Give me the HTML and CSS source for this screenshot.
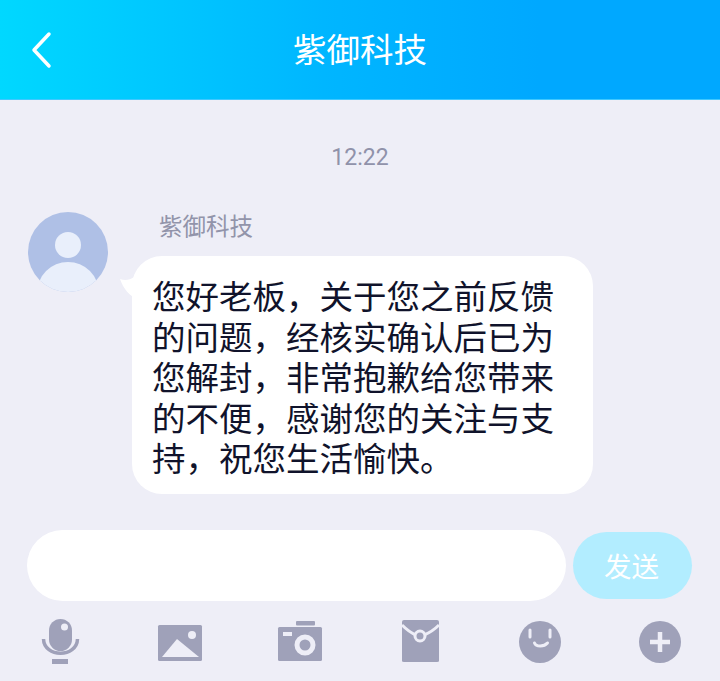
FILE: index.html
```html
<!DOCTYPE html>
<html lang="zh-CN">

<head>
    <meta charset="UTF-8">
    <meta name="viewport" content="width=device-width, initial-scale=1.0">
    <title>紫御科技</title>
    <link rel="stylesheet" href="styles.css">
</head>

<body>
    <header class="top-bar">
        <svg class="back-icon" width="24" height="38" viewBox="0 0 24 38">
            <path d="M19 3 L4 19 L19 35" />
        </svg>
        <div class="top-title">紫御科技</div>
    </header>

    <main class="chat">
        <div class="chat-time">12:22</div>

        <div class="message">
            <svg class="avatar" width="80" height="80" viewBox="0 0 80 80">
                <defs>
                    <clipPath id="avatarClip">
                        <circle cx="40" cy="40" r="40" />
                    </clipPath>
                </defs>
                <circle cx="40" cy="40" r="40" fill="#afc0e6" />
                <circle cx="40" cy="33" r="13" fill="#e9effb" />
                <ellipse cx="40" cy="81" rx="31" ry="31" fill="#e9effb" clip-path="url(#avatarClip)" />
            </svg>
            <div class="message-body">
                <div class="sender">紫御科技</div>
                <div class="bubble">
                    <svg class="bubble-tail" width="18" height="24" viewBox="0 0 18 24">
                        <path d="M0 2 C5 4 10 3 14 0 L18 0 L18 22 C10 20 3 11 0 2 Z" />
                    </svg>
                    您好老板，关于您之前反馈的问题，经核实确认后已为您解封，非常抱歉给您带来的不便，感谢您的关注与支持，祝您生活愉快。
                </div>
            </div>
        </div>
    </main>

    <div class="composer">
        <div class="composer-input"></div>
        <button class="send-button">发送</button>
    </div>

    <!-- Bottom tools -->
    <div class="toolbar">
        <svg class="tool" width="48" height="48" viewBox="0 0 48 48">
            <rect x="13" y="1" width="23" height="32" rx="11.5" />
            <circle class="cut" cx="28.5" cy="9" r="3.5" />
            <path class="line" d="M7.5 21 C8 40 41 40 41.500 21" />
            <rect x="16" y="41" width="16" height="5" />
        </svg>
        <svg class="tool" width="48" height="48" viewBox="0 0 48 48">
            <rect x="2" y="7" width="44" height="36" rx="1.5" />
            <circle class="cut" cx="36" cy="17" r="4" />
            <path class="cut" d="M6 39 L21 21 L43 39 Z" />
        </svg>
        <svg class="tool" width="48" height="48" viewBox="0 0 48 48">
            <rect x="20" y="3" width="19" height="4.500" rx="1" />
            <rect x="2" y="9" width="44" height="34" rx="1.500" />
            <rect class="cut" x="7" y="14" width="9" height="4" />
            <circle class="ring" cx="29" cy="27" r="8" />
        </svg>
        <svg class="tool" width="48" height="48" viewBox="0 0 48 48">
            <path d="M8 2 H41 Q43 2 43 4 V43 Q43 44 41 44 H8 Q6 44 6 43 V4 Q6 2 8 2 Z" />
            <path class="flap" d="M6 7 C11 12 15 15 20 17 M28 17 C33 15 38 12 43 7" />
            <circle class="ring small" cx="24" cy="18" r="5" />
        </svg>
        <svg class="tool" width="48" height="48" viewBox="0 0 48 48">
            <circle cx="24" cy="24" r="21" />
            <path class="face" d="M14 12 V19 M34 12 V19 M18.500 25 C20 29 28 29 31.500 25" />
        </svg>
        <svg class="tool" width="48" height="48" viewBox="0 0 48 48">
            <circle cx="24" cy="24" r="21" />
            <path class="face thick" d="M24 14 V34 M14 24 H34" />
        </svg>
    </div>
</body>

</html>
```

FILE: styles.css
```css
/* Base Styles */
body {
    font-family: "Noto Sans CJK SC", "Noto Sans", sans-serif;
    background-color: #eeeef7;
    margin: 0;
    padding: 0;
    height: 681px;
    overflow: hidden;
    display: flex;
    flex-direction: column;
}

.top-bar {
    height: 99px;
    flex-shrink: 0;
    display: flex;
    align-items: center;
    justify-content: center;
    position: relative;
    background: linear-gradient(90deg, #00d8ff 0%, #00b6ff 45%, #00a8ff 75%, #00a8ff 100%);
    border-bottom: 1px solid #40c8ff;
}

.back-icon {
    position: absolute;
    left: 30px;
    top: 31px;
}

.back-icon path {
    fill: none;
    stroke: white;
    stroke-width: 3.5;
    stroke-linecap: round;
    stroke-linejoin: round;
}

.top-title {
    color: white;
    font-size: 33.5px;
    line-height: 46px;
    margin-bottom: 3px;
}

/* Chat */
.chat {
    flex: 1;
}

.chat-time {
    margin-top: 43px;
    height: 30px;
    line-height: 30px;
    text-align: center;
    font-family: Roboto, sans-serif;
    font-size: 23px;
    color: #9092aa;
}

.message {
    display: flex;
    gap: 24px;
    margin-top: 39px;
    padding-left: 28px;
}

.avatar {
    flex-shrink: 0;
}

.sender {
    margin-left: 27px;
    height: 26px;
    line-height: 26px;
    font-size: 23.5px;
    color: #9294aa;
}

.bubble {
    position: relative;
    width: 402px;
    margin-top: 18px;
    padding: 19px 39px 16px 20px;
    background-color: white;
    border-radius: 30px;
    font-size: 33.5px;
    line-height: 40.5px;
    color: #10132b;
}

.bubble-tail {
    position: absolute;
    left: -12px;
    top: 21px;
}

.bubble-tail path {
    fill: white;
}

/* Composer */
.composer {
    display: flex;
    align-items: center;
    gap: 7px;
    padding: 0 28px 0 27px;
}

.composer-input {
    flex: 1;
    height: 71px;
    background-color: white;
    border-radius: 36px;
}

.send-button {
    width: 119px;
    height: 67px;
    padding: 0 2px 2px 0;
    border: none;
    border-radius: 34px;
    background-color: #b2edff;
    color: white;
    font-family: inherit;
    font-size: 27.5px;
}

.toolbar {
    height: 78px;
    padding-top: 2px;
    flex-shrink: 0;
    display: grid;
    grid-template-columns: repeat(6, 1fr);
    justify-items: center;
    align-items: center;
}

.tool {
    fill: #9fa1b9;
}

.tool .cut {
    fill: #eeeef7;
}

.tool .line {
    fill: none;
    stroke: #9fa1b9;
    stroke-width: 3.5;
}

.tool .ring {
    fill: none;
    stroke: #eeeef7;
    stroke-width: 5;
}

.tool .ring.small {
    stroke-width: 3;
}

.tool .flap {
    fill: none;
    stroke: #eeeef7;
    stroke-width: 3;
}

.tool .face {
    fill: none;
    stroke: #eeeef7;
    stroke-width: 3;
    stroke-linecap: round;
}

.tool .face.thick {
    stroke-width: 4.5;
    stroke-linecap: butt;
}
```
